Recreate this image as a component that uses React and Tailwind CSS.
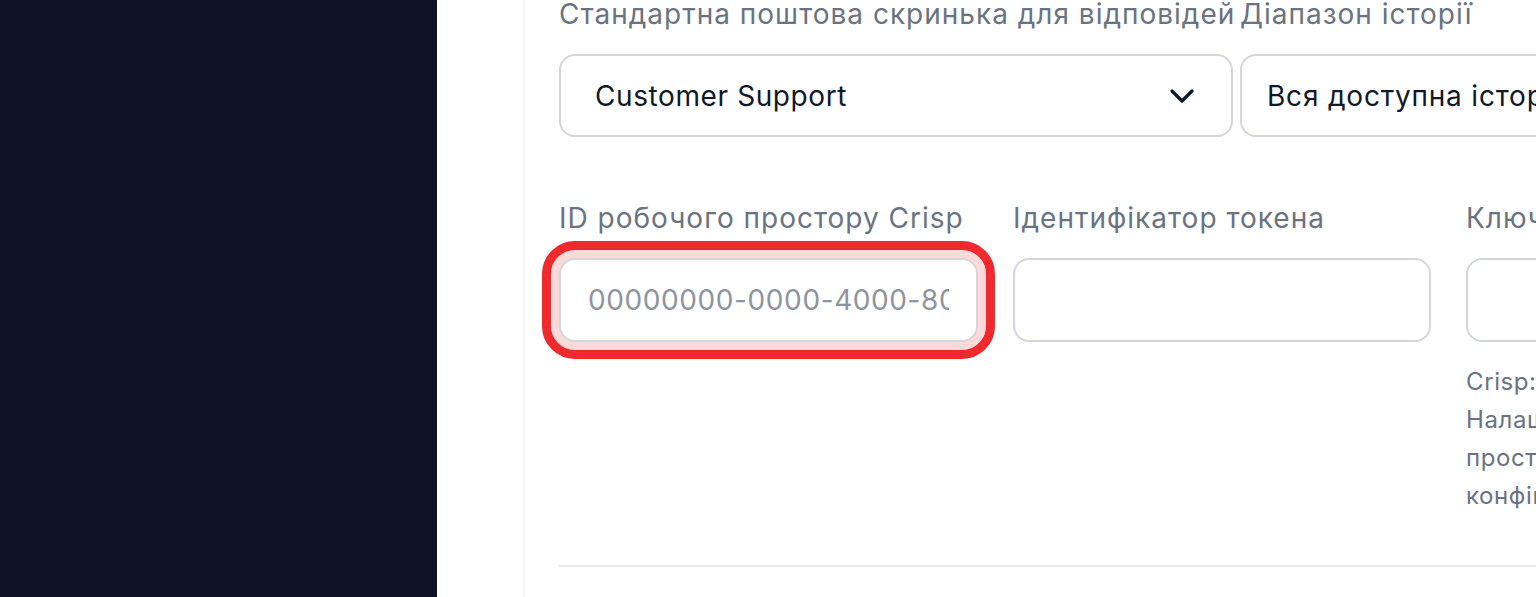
import React from "react";
import { ChevronDown } from "lucide-react";

const font = { fontFamily: "Inter, 'Noto Sans', 'Liberation Sans', sans-serif" };

function Label({ children }) {
  return (
    <div className="text-[28px] leading-[40px] tracking-[1px] text-[#6b7280] whitespace-nowrap mb-[20px]">
      {children}
    </div>
  );
}

export default function App() {
  return (
    <div className="flex h-[597px] w-[1536px] overflow-hidden bg-white" style={font}>
      <aside className="w-[437px] shrink-0 bg-[#0e1327]" />
      <div className="w-[86px] shrink-0 bg-white" />
      <main className="flex-1 min-w-0 border-l-2 border-[#f5f6f7] pl-[34px] overflow-hidden">
        <div className="w-[1400px] mt-[-6px]">
          <div className="grid grid-cols-[674px_674px] gap-x-[7px]">
            <div>
              <Label>Стандартна поштова скринька для відповідей</Label>
              <button className="flex h-[83px] w-full items-center justify-between rounded-[16px] border-2 border-[#d4d6db] bg-white pl-[34px] pr-[29px] text-left">
                <span className="text-[28px] tracking-[0.6px] text-[#111827]">Customer Support</span>
                <ChevronDown size={40} strokeWidth={2} className="text-[#111827]" />
              </button>
            </div>
            <div>
              <Label>Діапазон історії</Label>
              <button className="flex h-[83px] w-full items-center rounded-[16px] border-2 border-[#d4d6db] bg-white pl-[25px] pr-[29px] text-left">
                <span className="text-[28px] tracking-[0.8px] text-[#111827] whitespace-nowrap">Вся доступна історія</span>
              </button>
            </div>
          </div>

          <div className="mt-[61px] grid grid-cols-[419px_418px_419px] gap-x-[35px]">
            <div>
              <Label>ID робочого простору Crisp</Label>
              <div className="relative">
                <input
                  readOnly
                  placeholder="00000000-0000-4000-8000-000000000000"
                  className="block h-[84px] w-full rounded-[16px] border-2 border-[#d4d6db] bg-white px-[27px] text-[28px] tracking-[0.6px] text-[#111827] placeholder:text-[#8f949d] outline-none shadow-[0_0_0_8px_#fcdada]"
                />
                <div className="pointer-events-none absolute -inset-[17px] rounded-[33px] border-[9px] border-[#ee2a2f]" />
              </div>
            </div>
            <div>
              <Label>Ідентифікатор токена</Label>
              <input
                readOnly
                className="block h-[84px] w-full rounded-[16px] border-2 border-[#d4d6db] bg-white px-[27px] text-[28px] outline-none"
              />
            </div>
            <div>
              <Label>Ключ токена</Label>
              <input
                readOnly
                className="block h-[84px] w-full rounded-[16px] border-2 border-[#d4d6db] bg-white px-[27px] text-[28px] outline-none"
              />
              <div className="mt-[21px] text-[24px] leading-[38px] tracking-[0.6px] text-[#6b7280]">
                <div className="whitespace-nowrap">Crisp: Settings → Plugins</div>
                <div className="whitespace-nowrap">Налаштування робочого</div>
                <div className="whitespace-nowrap">простору → ID та токени</div>
                <div className="whitespace-nowrap">конфігурації API.</div>
              </div>
            </div>
          </div>

          <div className="mt-[50px] border-t-2 border-[#e8e9ec]" />
        </div>
      </main>
    </div>
  );
}
